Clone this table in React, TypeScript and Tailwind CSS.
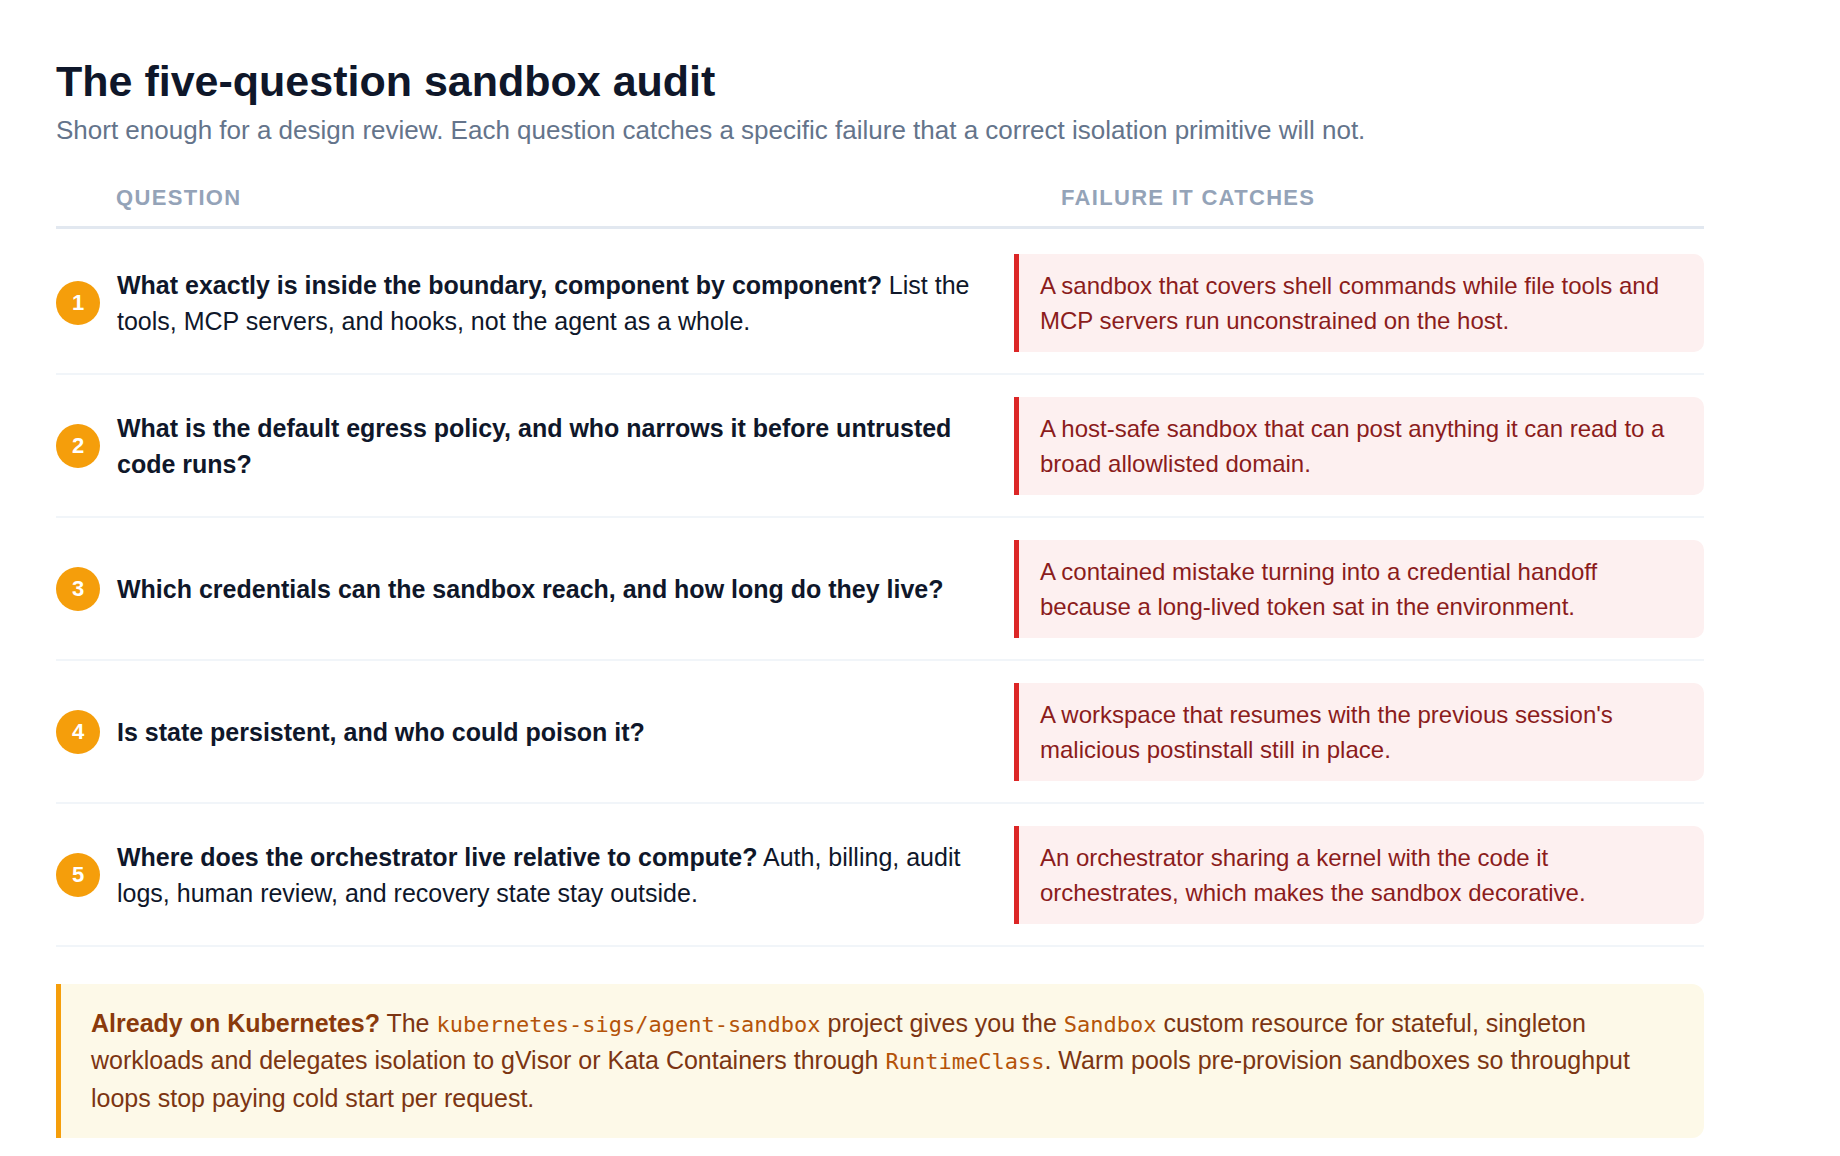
import React from 'react';

type AuditRow = {
  n: number;
  question: string;
  detail?: string;
  failure: string;
};

const rows: AuditRow[] = [
  {
    n: 1,
    question: 'What exactly is inside the boundary, component by component?',
    detail: 'List the tools, MCP servers, and hooks, not the agent as a whole.',
    failure: 'A sandbox that covers shell commands while file tools and MCP servers run unconstrained on the host.',
  },
  {
    n: 2,
    question: 'What is the default egress policy, and who narrows it before untrusted code runs?',
    failure: 'A host-safe sandbox that can post anything it can read to a broad allowlisted domain.',
  },
  {
    n: 3,
    question: 'Which credentials can the sandbox reach, and how long do they live?',
    failure: 'A contained mistake turning into a credential handoff because a long-lived token sat in the environment.',
  },
  {
    n: 4,
    question: 'Is state persistent, and who could poison it?',
    failure: "A workspace that resumes with the previous session's malicious postinstall still in place.",
  },
  {
    n: 5,
    question: 'Where does the orchestrator live relative to compute?',
    detail: 'Auth, billing, audit logs, human review, and recovery state stay outside.',
    failure: 'An orchestrator sharing a kernel with the code it orchestrates, which makes the sandbox decorative.',
  },
];

function Code({ children }: { children: React.ReactNode }) {
  return (
    <code className="font-['DejaVu_Sans_Mono','Liberation_Mono',monospace] text-[22px] leading-none text-[#b45309]">
      {children}
    </code>
  );
}

export default function App() {
  return (
    <main className="min-h-screen bg-white pl-14 pt-14 pb-10 font-['Liberation_Sans',Arial,sans-serif]">
      <div className="w-[1648px]">
        <h1 className="text-[43px] font-bold leading-[1.2] text-[#0f172a]">The five-question sandbox audit</h1>
        <p className="mt-1 text-[26px] leading-[1.4] text-[#64748b]">
          Short enough for a design review. Each question catches a specific failure that a correct isolation primitive will not.
        </p>

        {/* table header */}
        <div className="mt-[33px] grid grid-cols-[958px_690px] border-b-[3px] border-[#e2e8f0] pb-3 text-[22px] font-bold uppercase leading-[33px] tracking-[0.06em] text-[#94a3b8]">
          <div className="pl-[60px]">Question</div>
          <div className="pl-[47px]">Failure it catches</div>
        </div>

        <div className="pt-[3px]">
          {rows.map(r => (
            <div key={r.n} className="grid grid-cols-[958px_690px] items-center border-b-2 border-[#f1f5f9] pt-[22px] pb-[21px]">
              <div className="flex items-center gap-[17px]">
                <span className="flex h-[44px] w-[44px] shrink-0 items-center justify-center rounded-full bg-[#f59e0b] text-[22px] font-bold text-white">
                  {r.n}
                </span>
                <p className="flex-1 pr-6 text-[25px] leading-[36px] text-[#0f172a]">
                  <strong className="font-bold">{r.question}</strong>
                  {r.detail && <> {r.detail}</>}
                </p>
              </div>
              <div className="flex h-[98px] items-center rounded-r-[10px] border-l-[5px] border-[#dc2626] bg-[#fdf0f0] px-[21px] text-[24px] leading-[35px] text-[#8b1c1c]">
                <p>{r.failure}</p>
              </div>
            </div>
          ))}
        </div>

        <div className="mt-[37px] rounded-r-[12px] border-l-[5px] border-[#f59e0b] bg-[#fdf9e8] py-[21px] pl-[30px] pr-[30px] text-[25px] leading-[37.5px] text-[#7c3512]">
          <strong className="font-bold text-[#8a3a0c]">Already on Kubernetes?</strong> The{' '}
          <Code>kubernetes-sigs/agent-sandbox</Code> project gives you the <Code>Sandbox</Code> custom resource for
          stateful, singleton workloads and delegates isolation to gVisor or Kata Containers through{' '}
          <Code>RuntimeClass</Code>. Warm pools pre-provision sandboxes so throughput loops stop paying cold start per
          request.
        </div>
      </div>
    </main>
  );
}
